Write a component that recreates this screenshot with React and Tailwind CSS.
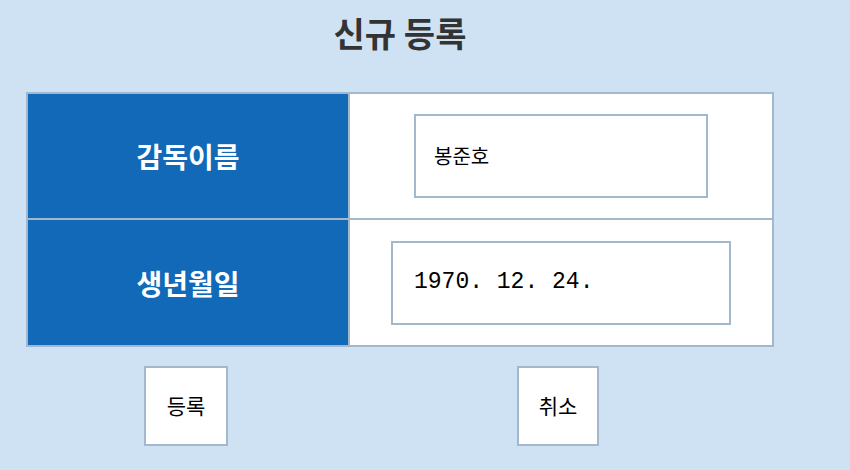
import React from 'react';

const KR = { fontFamily: '"Noto Sans CJK KR", "Noto Sans", sans-serif' };

const rows = [
  { label: '감독이름', value: '봉준호', mono: false },
  { label: '생년월일', value: '1970. 12. 24.', mono: true },
];

const App = () => {
  return (
    <div className="min-h-[470px] w-[850px] bg-[#cfe2f3]" style={KR}>
      <div className="w-[800px]">
        {/* Title */}
        <div className="h-[66px] flex items-center justify-center">
          <h1 className="text-[34px] font-bold text-[#333333] leading-none">신규 등록</h1>
        </div>

        {/* Form table */}
        <div className="mt-[26px] mx-auto w-[748px] border-2 border-[#a3b8cc] bg-white">
          {rows.map((row, i) => (
            <div
              key={row.label}
              className={`grid grid-cols-[320px_2px_422px] ${i === 0 ? 'h-[126px] border-b-2 border-[#a3b8cc]' : 'h-[125px]'}`}
            >
              <div className="bg-[#1169b7] flex items-center justify-center">
                <span className="text-white text-[28px] font-bold leading-none">{row.label}</span>
              </div>
              <div className="bg-[#a3b8cc]" />
              <div className="flex items-center justify-center">
                {row.mono ? (
                  <div className="w-[340px] h-[84px] border-2 border-[#a3b8cc] flex items-center pl-[21px]">
                    <span
                      className="text-[23px] text-black leading-none"
                      style={{ fontFamily: '"Liberation Mono", monospace' }}
                    >
                      {row.value}
                    </span>
                  </div>
                ) : (
                  <div className="w-[294px] h-[84px] border-2 border-[#a3b8cc] flex items-center pl-[18px]">
                    <span className="text-[20px] text-black leading-none">{row.value}</span>
                  </div>
                )}
              </div>
            </div>
          ))}
        </div>

        {/* Buttons */}
        <div className="mt-[19px] ml-[26px] grid grid-cols-[320px_424px] justify-items-center">
          <button className="w-[84px] h-[80px] border-2 border-[#a3b8cc] bg-white text-[21px] text-black">
            등록
          </button>
          <button className="w-[82px] h-[80px] border-2 border-[#a3b8cc] bg-white text-[21px] text-black">
            취소
          </button>
        </div>
      </div>
    </div>
  );
};

export default App;
